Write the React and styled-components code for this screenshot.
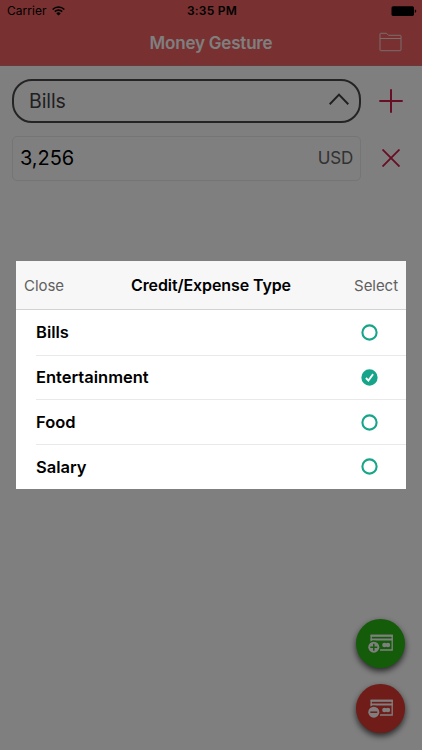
import React from 'react';
import styled, { createGlobalStyle } from 'styled-components';

const GlobalStyle = createGlobalStyle`
  * { box-sizing: border-box; }
  body { margin: 0; background: #fff; font-family: Inter, Roboto, sans-serif; color: #000; overflow: hidden; }
  button { border: 0; padding: 0; background: none; font: inherit; color: inherit; }
  svg { display: block; }
`;

const Screen = styled.div`
  position: relative;
  width: 422px;
  height: 750px;
  display: flex;
  flex-direction: column;
  background: #fff;
`;

const Header = styled.header`
  height: 66px;
  background: #f26060;
  border-bottom: 1px solid #d47474;
`;

const StatusBar = styled.div`
  height: 22px;
  display: grid;
  grid-template-columns: 1fr auto 1fr;
  align-items: center;
  padding: 0 5px 0 7px;
  font-size: 12px;
  line-height: 22px;
  letter-spacing: 0.05px;
`;

const Carrier = styled.div`
  display: flex;
  align-items: center;
  gap: 5px;
`;

const Time = styled.div`
  font-weight: 600;
  font-size: 12px;
  letter-spacing: 0.25px;
`;

const Battery = styled.div`
  justify-self: end;
`;

const NavBar = styled.div`
  height: 43px;
  display: grid;
  grid-template-columns: 1fr auto 1fr;
  align-items: center;
  padding: 0 20px;
`;

const NavTitle = styled.h1`
  grid-column: 2;
  margin: 0;
  font-size: 17px;
  font-weight: 600;
  line-height: 41px;
  letter-spacing: -0.2px;
  color: #fff;
`;

const NavButton = styled.button`
  justify-self: end;
  padding-bottom: 3px;
`;

const Form = styled.main`
  display: grid;
  grid-template-columns: 349px 60px;
  grid-auto-rows: 45px;
  row-gap: 12px;
  padding: 12.6px 0 0 12px;
`;

const Picker = styled.div`
  height: 44.5px;
  display: flex;
  align-items: center;
  justify-content: space-between;
  padding: 0 10px 0 15px;
  border: 2px solid #484848;
  border-radius: 20px;
  font-size: 19.5px;
  line-height: 40px;
  letter-spacing: -0.1px;
  color: #404044;

  svg { margin-bottom: 3px; }
`;

const Amount = styled.div`
  height: 45px;
  display: flex;
  align-items: center;
  justify-content: space-between;
  padding: 0 7px 1px;
  border: 1px solid #eaeaea;
  border-radius: 5px;
  font-size: 20px;
  letter-spacing: -0.05px;
`;

const Currency = styled.span`
  font-size: 17px;
  letter-spacing: -0.2px;
  color: #646464;
`;

const FormAction = styled.button`
  display: flex;
  align-items: center;
  justify-content: center;
  padding-bottom: 1.2px;
`;

const Actions = styled.div`
  margin-top: auto;
  padding: 0 16.6px 16.6px 0;
  display: flex;
  flex-direction: column;
  align-items: flex-end;
  gap: 16px;
`;

const RoundButton = styled.button`
  width: 49px;
  height: 49px;
  display: flex;
  align-items: center;
  justify-content: center;
  border-radius: 50%;
  background: ${(p) => p.$color};
  box-shadow: 0 3px 6px rgba(0, 0, 0, 0.7);
`;

const Overlay = styled.div`
  position: absolute;
  inset: 0;
  padding: 261.4px 16px 0;
  background: rgba(0, 0, 0, 0.5);
`;

const Dialog = styled.section`
  height: 227.5px;
  background: #fff;
`;

const DialogHeader = styled.div`
  height: 48.5px;
  display: grid;
  grid-template-columns: 1fr auto 1fr;
  align-items: center;
  padding: 0 8px;
  background: #f7f7f7;
  border-bottom: 1px solid #d2d2d2;
`;

const DialogTitle = styled.h2`
  margin: 0;
  font-size: 16px;
  font-weight: 600;
  letter-spacing: -0.1px;
`;

const DialogButton = styled.button`
  justify-self: ${(p) => p.$side};
  font-size: 15px;
  letter-spacing: -0.05px;
  color: #606060;
`;

const Options = styled.ul`
  margin: 0;
  padding: 0 0 0 20px;
  list-style: none;
`;

const Option = styled.li`
  height: 44.7px;
  display: flex;
  align-items: center;
  justify-content: space-between;
  padding-right: 28px;
  font-size: 16.5px;
  font-weight: 600;

  & + & { border-top: 1px solid #e9e9e9; }
`;

const WifiIcon = () => (
  <svg width="13" height="10" viewBox="0 0 12 9" fill="none" stroke="#000" strokeWidth="1.4">
    <path d="M.6 3.1a7.7 7.7 0 0 1 10.8 0M2.6 5.1a4.8 4.8 0 0 1 6.8 0" />
    <path d="M6 8.7 4 6.7a2.9 2.9 0 0 1 4 0Z" fill="#000" stroke="none" />
  </svg>
);

const BatteryIcon = () => (
  <svg width="26" height="11" viewBox="0 0 26 11">
    <rect x="0.5" y="0.3" width="22.5" height="9.6" rx="1.6" />
    <path d="M23.8 3.4q1.5.3 1.5 1.7t-1.5 1.7Z" />
  </svg>
);

const FolderIcon = () => (
  <svg width="23" height="20" viewBox="0 0 23 20" fill="none" stroke="#f5dada" strokeWidth="1">
    <path d="M1 18V2q0-.7.7-.7h5.8l2 2h11.8q.7 0 .7.7v14q0 .7-.7.7H1.7Q1 18.7 1 18ZM1 6.500h21" />
  </svg>
);

const ChevronUpIcon = () => (
  <svg width="20" height="12" viewBox="0 0 20 12" fill="none" stroke="#404040" strokeWidth="2">
    <path d="m.7 11.2 9.3-9.6 9.3 9.6" />
  </svg>
);

const PlusIcon = () => (
  <svg width="24" height="24" viewBox="0 0 24 24" stroke="#cf1f4a" strokeWidth="2">
    <path d="M12 .3v23.4M.3 12h23.4" />
  </svg>
);

const CrossIcon = () => (
  <svg width="18" height="18" viewBox="0 0 18 18" stroke="#cf1f4a" strokeWidth="1.9">
    <path d="m.5.5 17 17M17.5.5l-17 17" />
  </svg>
);

const CardIcon = ({ color, plus }) => (
  <svg width="26" height="19" viewBox="0 0 26 19">
    <path d="M3.2 9V1.5h21v14.500H12" fill="none" stroke="#fff" strokeWidth="1.3" />
    <path d="M2.6.8h22.2v1.9h-22.2ZM2.6 4.5h22.2v2h-22.2Z" fill="#fff" />
    <circle cx="16.5" cy="11" r="2.3" fill="#fff" />
    <circle cx="19.9" cy="11" r="2.3" fill="#fff" />
    <circle cx="5.8" cy="13.2" r="6.7" fill={color} />
    <circle cx="5.8" cy="13.2" r="5.5" fill="#fff" />
    <path d={plus ? 'M2.3 13.2h7M5.8 9.7v7' : 'M2.3 13.2h7'} stroke={color} strokeWidth="1.5" />
  </svg>
);

const RadioIcon = ({ checked }) => (
  <svg width="17" height="17" viewBox="0 0 17 17" fill="none">
    <circle cx="8.5" cy="8.5" r="7.1" fill={checked ? '#16a58a' : '#fff'} stroke="#16a58a" strokeWidth="2.1" />
    {checked && <path d="m4.9 9 2.5 2.500 4.700-6.400" stroke="#fff" strokeWidth="1.8" />}
  </svg>
);

const types = ['Bills', 'Entertainment', 'Food', 'Salary'];
const selected = 'Entertainment';

export default function App() {
  return (
    <>
      <GlobalStyle />
      <Screen>
        <Header>
          <StatusBar>
            <Carrier>Carrier <WifiIcon /></Carrier>
            <Time>3:35 PM</Time>
            <Battery><BatteryIcon /></Battery>
          </StatusBar>
          <NavBar>
            <NavTitle>Money Gesture</NavTitle>
            <NavButton aria-label="Open folder"><FolderIcon /></NavButton>
          </NavBar>
        </Header>
        <Form>
          <Picker>Bills <ChevronUpIcon /></Picker>
          <FormAction aria-label="Add"><PlusIcon /></FormAction>
          <Amount>3,256 <Currency>USD</Currency></Amount>
          <FormAction aria-label="Clear"><CrossIcon /></FormAction>
        </Form>
        <Actions>
          <RoundButton $color="#28b814" aria-label="Add credit"><CardIcon color="#28b814" plus /></RoundButton>
          <RoundButton $color="#e03830" aria-label="Add expense"><CardIcon color="#e03830" /></RoundButton>
        </Actions>
        <Overlay>
          <Dialog role="dialog">
            <DialogHeader>
              <DialogButton $side="start">Close</DialogButton>
              <DialogTitle>Credit/Expense Type</DialogTitle>
              <DialogButton $side="end">Select</DialogButton>
            </DialogHeader>
            <Options>
              {types.map((type) => (
                <Option key={type}>{type}<RadioIcon checked={type === selected} /></Option>
              ))}
            </Options>
          </Dialog>
        </Overlay>
      </Screen>
    </>
  );
}
